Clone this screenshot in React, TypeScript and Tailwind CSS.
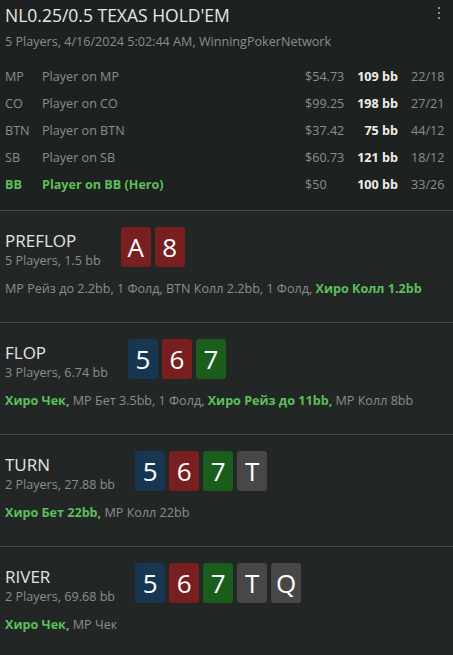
const font = { fontFamily: '"Open Sans", "Noto Sans", sans-serif' };

type Player = { pos: string; name: string; cash: string; bb: string; stats: string; hero?: boolean };

const players: Player[] = [
  { pos: 'MP', name: 'Player on MP', cash: '$54.73', bb: '109 bb', stats: '22/18' },
  { pos: 'CO', name: 'Player on CO', cash: '$99.25', bb: '198 bb', stats: '27/21' },
  { pos: 'BTN', name: 'Player on BTN', cash: '$37.42', bb: '75 bb', stats: '44/12' },
  { pos: 'SB', name: 'Player on SB', cash: '$60.73', bb: '121 bb', stats: '18/12' },
  { pos: 'BB', name: 'Player on BB (Hero)', cash: '$50', bb: '100 bb', stats: '33/26', hero: true },
];

const cardColors: Record<string, string> = {
  r: 'bg-[#7a1f1f]',
  b: 'bg-[#163652]',
  g: 'bg-[#1b5e1b]',
  n: 'bg-[#474747]',
};

function Card({ rank, suit }: { rank: string; suit: string }) {
  return (
    <div
      className={`${cardColors[suit]} w-[30px] h-[40px] rounded-[3px] flex items-center justify-center text-white text-[26px] leading-none`}
    >
      {rank}
    </div>
  );
}

type Action = { text: string; hero?: boolean };

function Street({
  title,
  info,
  cards,
  actions,
}: {
  title: string;
  info: string;
  cards: [string, string][];
  actions: Action[];
}) {
  return (
    <section className="border-t border-[#454947] px-[5px] pt-[16px] pb-[24px]">
      <div className="flex items-start gap-[20px]">
        <div className="mt-[3px]">
          <div className="text-[17px] leading-[22px] text-[#e2e4e3]">{title}</div>
          <div className="text-[12.6px] leading-[18px] text-[#8b8e8c]">{info}</div>
        </div>
        <div className="flex gap-[4px]">
          {cards.map(([r, s], i) => (
            <Card key={i} rank={r} suit={s} />
          ))}
        </div>
      </div>
      <div className="mt-[10px] text-[12.6px] leading-[18px] text-[#8b8e8c]">
        {actions.map((a, i) => (
          <span key={i} className={a.hero ? 'font-bold text-[#5cbf5c]' : ''}>
            {a.text}
            {i < actions.length - 1 ? ' ' : ''}
          </span>
        ))}
      </div>
    </section>
  );
}

export default function App() {
  return (
    <div className="min-h-screen w-[453px] bg-[#222725]" style={font}>
      <header className="bg-[#1d2220] px-[5px] pt-[3px] pb-[11px]">
        <div className="flex items-start justify-between">
          <h1 className="text-[17.5px] leading-[24px] text-[#e6e8e7]">NL0.25/0.5 TEXAS HOLD'EM</h1>
          <svg width="4" height="16" viewBox="0 0 4 16" className="mt-[4px] mr-[7px]" fill="#8f9290">
            <rect x="1" y="0" width="2" height="2" />
            <rect x="1" y="5" width="2" height="2" />
            <rect x="1" y="10" width="2" height="2" />
          </svg>
        </div>
        <div className="mt-[6px] text-[12.6px] leading-[18px] text-[#8b8e8c]">
          5 Players, 4/16/2024 5:02:44 AM, WinningPokerNetwork
        </div>
        <div className="mt-[13px]">
          {players.map((p) => (
            <div
              key={p.pos}
              className={`flex items-center h-[27px] text-[12.6px] ${p.hero ? 'text-[#5cbf5c] font-bold' : 'text-[#8b8e8c]'}`}
            >
              <div className="w-[37px]">{p.pos}</div>
              <div className="flex-1">{p.name}</div>
              <div className="w-[50px] text-[#8b8e8c] font-normal">{p.cash}</div>
              <div className="w-[43px] text-right font-bold text-[#eceeed]">{p.bb}</div>
              <div className="w-[37px] ml-[13px] text-[#8b8e8c] font-normal">{p.stats}</div>
            </div>
          ))}
        </div>
      </header>

      <Street
        title="PREFLOP"
        info="5 Players, 1.5 bb"
        cards={[
          ['A', 'r'],
          ['8', 'r'],
        ]}
        actions={[
          { text: 'MP Рейз до 2.2bb, 1 Фолд, BTN Колл 2.2bb, 1 Фолд,' },
          { text: 'Хиро Колл 1.2bb', hero: true },
        ]}
      />
      <Street
        title="FLOP"
        info="3 Players, 6.74 bb"
        cards={[
          ['5', 'b'],
          ['6', 'r'],
          ['7', 'g'],
        ]}
        actions={[
          { text: 'Хиро Чек,', hero: true },
          { text: 'MP Бет 3.5bb, 1 Фолд,' },
          { text: 'Хиро Рейз до 11bb,', hero: true },
          { text: 'MP Колл 8bb' },
        ]}
      />
      <Street
        title="TURN"
        info="2 Players, 27.88 bb"
        cards={[
          ['5', 'b'],
          ['6', 'r'],
          ['7', 'g'],
          ['T', 'n'],
        ]}
        actions={[
          { text: 'Хиро Бет 22bb,', hero: true },
          { text: 'MP Колл 22bb' },
        ]}
      />
      <Street
        title="RIVER"
        info="2 Players, 69.68 bb"
        cards={[
          ['5', 'b'],
          ['6', 'r'],
          ['7', 'g'],
          ['T', 'n'],
          ['Q', 'n'],
        ]}
        actions={[
          { text: 'Хиро Чек,', hero: true },
          { text: 'MP Чек' },
        ]}
      />
    </div>
  );
}
